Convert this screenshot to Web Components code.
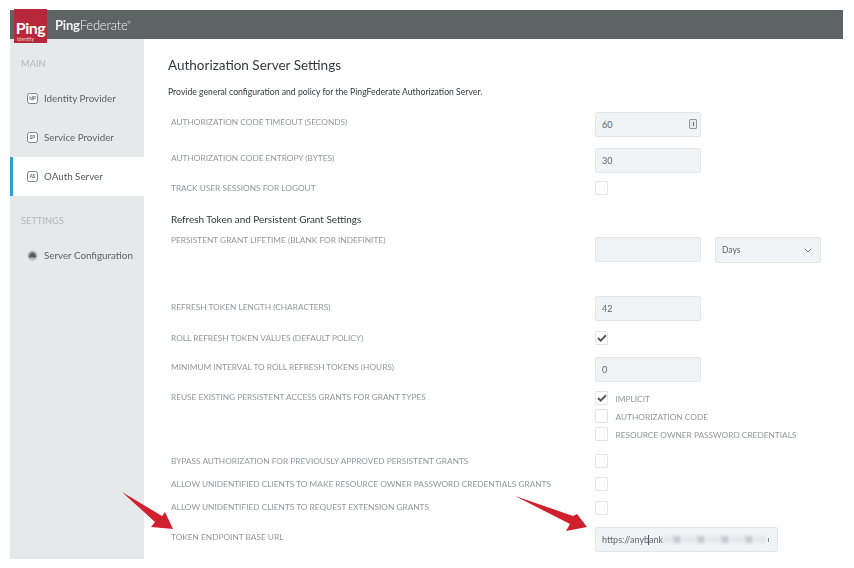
<!DOCTYPE html>
<html>
<head>
<meta charset="utf-8">
<title>PingFederate</title>
<style>
  html, body { margin: 0; background: #fff; }
  body { font-family: Lato, "Open Sans", sans-serif; width: 854px; height: 568px; overflow: hidden; }
</style>
</head>
<body>
<ping-app>
  <ping-nav slot="nav"></ping-nav>
  <auth-settings></auth-settings>
</ping-app>

<script>
// shared input look, used by the field elements
const FIELD_CSS = `
  box-sizing: border-box;
  background: #f0f4f6;
  border: 1px solid #e2e6e8;
  border-radius: 2px;
  color: #60666a;
  font-size: 9px;
`;

class PingApp extends HTMLElement {
    constructor() {
        super();
        this.attachShadow({ mode: 'open' });
        this.shadowRoot.innerHTML = `
            <style>
                :host { display: block; box-sizing: border-box; width: 833px; height: 549px; margin: 10px 0 0 10px; position: relative; filter: blur(0.35px); }
                .top { height: 29px; background: #5e6464; display: flex; align-items: center; }
                .logo { width: 33px; height: 34px; margin: -1px 0 0 4px; align-self: flex-start; background: #b8283c; color: #fff; position: relative; z-index: 1; text-align: center; font-weight: 700; font-size: 16px; letter-spacing: -0.5px; line-height: 16px; padding-top: 11px; box-sizing: border-box; }
                .logo small { position: absolute; left: 3px; top: 27px; font-size: 5px; font-weight: 400; line-height: 6px; letter-spacing: 0; color: #f0c8cd; }
                .brand { color: #f1f2f2; font-size: 13px; margin: 0 0 0 8px; letter-spacing: -0.2px; }
                .brand b { font-weight: 700; }
                .brand span { font-weight: 300; }
                .brand sup { font-size: 4px; vertical-align: 6px; line-height: 0; }
                .body { display: flex; height: 520px; }
                ::slotted([slot=nav]) { flex: none; }
                .arrow { position: absolute; left: 0; top: 0; pointer-events: none; overflow: visible; }
            </style>
            <div class="top">
                <div class="logo">Ping<small>Identity</small></div>
                <div class="brand"><b>Ping</b><span>Federate</span><sup>®</sup></div>
            </div>
            <div class="body">
                <slot name="nav"></slot>
                <slot></slot>
            </div>
            <svg class="arrow" width="833" height="549" viewBox="10 10 833 549">
                <path d="M122 492 L162 516 L165 512 L173 529 L151 527 L155 522 Z" fill="#d0202e"/>
                <path d="M515 496 L573 516 L577 514 L587 527 L566 531 L570 524 Z" fill="#d0202e"/>
            </svg>
        `;
    }
}

class PingNavItem extends HTMLElement {
    constructor() {
        super();
        this.attachShadow({ mode: 'open' });
    }

    connectedCallback() {
        const icon = this.getAttribute('icon') || '';
        const round = this.hasAttribute('round');
        this.shadowRoot.innerHTML = `
            <style>
                :host { display: flex; align-items: center; height: 39px; padding-left: 17px; gap: 6px; color: #5d6367; font-size: 9.8px; position: relative; }
                :host([active]) { background: #fff; border-left: 3px solid #2c9fd3; padding-left: 14px; color: #53595d; }
                :host([active])::after { content: ""; position: absolute; right: -5px; top: 0; width: 5px; height: 39px; background: #fff; clip-path: polygon(0 0, 100% 50%, 0 100%); }
                svg { flex: none; }
                span { margin-top: -1px; }
                text { font: 700 4.6px Lato, sans-serif; fill: #5d6367; }
            </style>
            ${round
                ? `<svg width="11" height="11" viewBox="0 0 11 11"><circle cx="5.5" cy="5.5" r="5" fill="#b4b8ba"/><path d="M2 7.4 Q2 2.8 5.5 2.4 Q9 2.8 9 7.4 Z" fill="#565b5e"/></svg>`
                : `<svg width="11" height="11" viewBox="0 0 11 11"><rect x=".5" y=".5" width="10" height="10" rx="2" fill="#fff" stroke="#7d8285"/><text x="5.5" y="7.2" text-anchor="middle">${icon}</text></svg>`}
            <span><slot></slot></span>
        `;
    }
}

class PingNav extends HTMLElement {
    constructor() {
        super();
        this.attachShadow({ mode: 'open' });
        this.shadowRoot.innerHTML = `
            <style>
                :host { display: block; width: 134px; height: 520px; background: #e6e9ea; }
                h4 { margin: 0; padding-left: 11px; font-weight: 400; font-size: 9.3px; color: #b3b8ba; line-height: 12px; }
                .main { padding-top: 19px; margin-bottom: 9px; }
                .settings { margin-top: 19px; margin-bottom: 8.5px; }
            </style>
            <h4 class="main">MAIN</h4>
            <ping-nav-item icon="IdP">Identity Provider</ping-nav-item>
            <ping-nav-item icon="SP">Service Provider</ping-nav-item>
            <ping-nav-item icon="AS" active>OAuth Server</ping-nav-item>
            <h4 class="settings">SETTINGS</h4>
            <ping-nav-item round>Server Configuration</ping-nav-item>
        `;
    }
}

class SettingRow extends HTMLElement {
    constructor() {
        super();
        this.attachShadow({ mode: 'open' });
    }

    connectedCallback() {
        const label = this.getAttribute('label') || '';
        const h = this.getAttribute('h') || '24';
        const lt = this.getAttribute('lt') || '0';
        this.shadowRoot.innerHTML = `
            <style>
                :host { display: grid; grid-template-columns: 424px auto; height: ${h}px; }
                .label { color: #92989b; font-size: 8.3px; line-height: 12px; margin-top: ${lt}px; white-space: nowrap; }
                .field { display: flex; flex-direction: column; align-items: flex-start; }
            </style>
            <div class="label">${label}</div>
            <div class="field"><slot></slot></div>
        `;
    }
}

class TextField extends HTMLElement {
    constructor() {
        super();
        this.attachShadow({ mode: 'open' });
    }

    connectedCallback() {
        const w = this.getAttribute('w') || '106';
        this.shadowRoot.innerHTML = `
            <style>
                :host { ${FIELD_CSS} display: flex; align-items: center; width: ${w}px; height: 25px; padding: 0 6px; position: relative; }
                .spin { position: absolute; right: 3px; top: 6px; width: 6px; height: 8px; border: 1px solid #93989b; border-radius: 1px; background: #e4e8ea; }
                .spin::after { content: ""; position: absolute; left: 2.5px; top: 2px; width: 1px; height: 4px; background: #6b7074; }
            </style>
            <slot></slot>
            ${this.hasAttribute('spin') ? '<div class="spin"></div>' : ''}
        `;
    }
}

class SelectField extends HTMLElement {
    constructor() {
        super();
        this.attachShadow({ mode: 'open' });
        this.shadowRoot.innerHTML = `
            <style>
                :host { ${FIELD_CSS} display: flex; align-items: center; justify-content: space-between; width: 106px; height: 26px; padding: 0 8px 0 6px; font-size: 8.5px; }
            </style>
            <slot></slot>
            <svg width="8" height="5" viewBox="0 0 8 5"><path d="M.7 .7 L4 4 L7.3 .7" fill="none" stroke="#6b7074" stroke-width="1"/></svg>
        `;
    }
}

class CheckField extends HTMLElement {
    constructor() {
        super();
        this.attachShadow({ mode: 'open' });
    }

    connectedCallback() {
        const checked = this.hasAttribute('checked');
        this.shadowRoot.innerHTML = `
            <style>
                :host { display: flex; align-items: center; height: 14px; margin-bottom: 4px; gap: 7.5px; color: #92989b; font-size: 8.3px; white-space: nowrap; }
                .box { box-sizing: border-box; width: 13px; height: 14px; background: #fff; border: 1px solid #e2e6e8; border-radius: 1px; display: flex; align-items: center; justify-content: center; }
                span { padding-top: 1px; }
            </style>
            <div class="box">
                ${checked ? '<svg width="10" height="8" viewBox="0 0 10 8"><path d="M1 4 L3.7 6.6 L9 1.2" fill="none" stroke="#53595d" stroke-width="2"/></svg>' : ''}
            </div>
            <span><slot></slot></span>
        `;
    }
}

class UrlField extends HTMLElement {
    constructor() {
        super();
        this.attachShadow({ mode: 'open' });
        this.shadowRoot.innerHTML = `
            <style>
                :host { ${FIELD_CSS} display: flex; align-items: center; width: 183px; height: 25px; padding: 0 6px; overflow: hidden; position: relative; }
                .smear { width: 103px; height: 7px; flex: none; background: repeating-linear-gradient(90deg, #e2e6e9 0 11px, #c3c9ce 11px 17px, #e6eaec 17px 24px); filter: blur(1.5px); }
                .caret { position: absolute; left: 52px; top: 7px; width: 1px; height: 10px; background: #4d5357; }
                .tick { margin-left: 2px; width: 1px; height: 4px; background: #7d8285; flex: none; }
            </style>
            <slot></slot>
            <div class="smear"></div>
            <div class="tick"></div>
            <div class="caret"></div>
        `;
    }
}

class AuthSettings extends HTMLElement {
    constructor() {
        super();
        this.attachShadow({ mode: 'open' });
        this.shadowRoot.innerHTML = `
            <style>
                :host { display: block; flex: 1; padding: 0 0 0 24px; }
                h2 { margin: 0; padding-top: 18px; font-size: 13.5px; line-height: 16px; font-weight: 400; color: #33383b; }
                p { margin: 0; padding-top: 13px; font-size: 8.66px; line-height: 12px; color: #33383b; height: 26px; }
                .rows { padding-left: 3px; }
                h3 { margin: 0; font-size: 9.95px; font-weight: 400; color: #33383b; height: 24px; line-height: 12px; }
                .days { display: flex; gap: 14px; }
            </style>
            <h2>Authorization Server Settings</h2>
            <p>Provide general configuration and policy for the PingFederate Authorization Server.</p>
            <div class="rows">
                <setting-row h="36" lt="4" label="AUTHORIZATION CODE TIMEOUT (SECONDS)"><text-field spin>60</text-field></setting-row>
                <setting-row h="33" lt="4" label="AUTHORIZATION CODE ENTROPY (BYTES)"><text-field>30</text-field></setting-row>
                <setting-row h="32" lt="1" label="TRACK USER SESSIONS FOR LOGOUT"><check-field></check-field></setting-row>
                <h3>Refresh Token and Persistent Grant Settings</h3>
                <setting-row h="59" lt="-3" label="PERSISTENT GRANT LIFETIME (BLANK FOR INDEFINITE)">
                    <div class="days"><text-field></text-field><select-field>Days</select-field></div>
                </setting-row>
                <setting-row h="35" lt="5" label="REFRESH TOKEN LENGTH (CHARACTERS)"><text-field>42</text-field></setting-row>
                <setting-row h="26" lt="1" label="ROLL REFRESH TOKEN VALUES (DEFAULT POLICY)"><check-field checked></check-field></setting-row>
                <setting-row h="34" lt="4" label="MINIMUM INTERVAL TO ROLL REFRESH TOKENS (HOURS)"><text-field>0</text-field></setting-row>
                <setting-row h="63" lt="0" label="REUSE EXISTING PERSISTENT ACCESS GRANTS FOR GRANT TYPES">
                    <check-field checked>IMPLICIT</check-field>
                    <check-field>AUTHORIZATION CODE</check-field>
                    <check-field>RESOURCE OWNER PASSWORD CREDENTIALS</check-field>
                </setting-row>
                <setting-row h="23" lt="1" label="BYPASS AUTHORIZATION FOR PREVIOUSLY APPROVED PERSISTENT GRANTS"><check-field></check-field></setting-row>
                <setting-row h="24" lt="1" label="ALLOW UNIDENTIFIED CLIENTS TO MAKE RESOURCE OWNER PASSWORD CREDENTIALS GRANTS"><check-field></check-field></setting-row>
                <setting-row h="26" lt="0" label="ALLOW UNIDENTIFIED CLIENTS TO REQUEST EXTENSION GRANTS"><check-field></check-field></setting-row>
                <setting-row h="25" lt="4" label="TOKEN ENDPOINT BASE URL"><url-field>https://anybank</url-field></setting-row>
            </div>
        `;
    }
}

customElements.define('ping-nav-item', PingNavItem);
customElements.define('ping-nav', PingNav);
customElements.define('text-field', TextField);
customElements.define('select-field', SelectField);
customElements.define('check-field', CheckField);
customElements.define('url-field', UrlField);
customElements.define('setting-row', SettingRow);
customElements.define('auth-settings', AuthSettings);
customElements.define('ping-app', PingApp);
</script>
</body>
</html>
